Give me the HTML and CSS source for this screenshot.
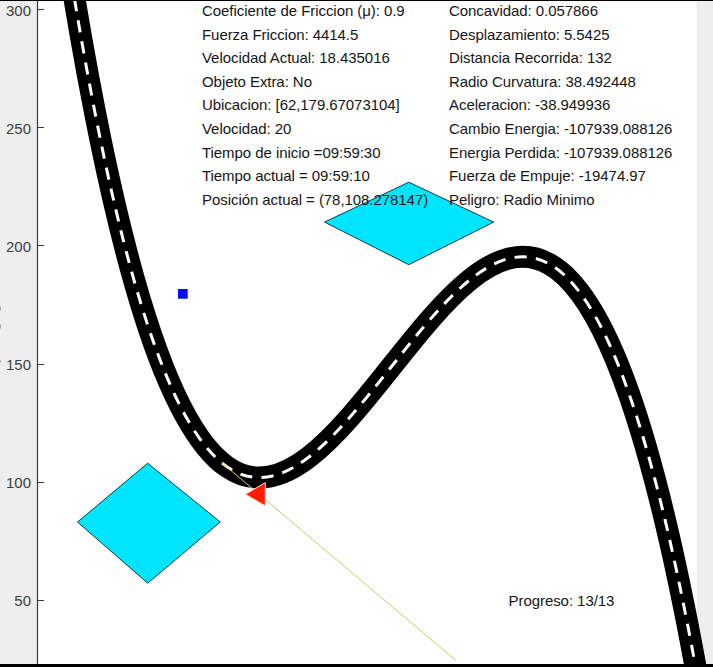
FILE: index.html
```html
<!DOCTYPE html>
<html lang="es">
<head>
<meta charset="utf-8">
<title>Simulación de pista</title>
<link rel="stylesheet" href="styles.css">
</head>
<body>
<main class="figure">
  <svg class="plot" viewBox="0 0 713 667" aria-hidden="true">
    <rect class="area" x="37" y="0" width="659.5" height="667"/>
    <path class="axis" d="M37.5 0V667M38 9.5h6M38 127.5h6M38 245.5h6M38 364.5h6M38 482.5h6M38 600.5h6"/>
    <path class="obstacle" d="M408.8 182.2L493.7 222.1L408.8 264.7L324.5 222.1Z"/>
    <path class="obstacle" d="M147.7 463.2L220.3 522L147.7 583.2L77.5 522Z"/>
    <path class="road" d="M61.75 -81.3C276.85 1338.7 491.97 -554.7 707.08 732.8"/>
    <path class="lane" d="M61.75 -81.3C276.85 1338.7 491.97 -554.7 707.08 732.8"/>
    <path class="tangent" d="M221.5 462.5L455.7 660.3"/>
    <path class="car" d="M245.5 494.3L265.3 482.6V505.8Z"/>
    <rect class="object" x="178" y="289" width="9.7" height="9.7"/>
    <path class="clipped" d="M0 306.5v4M0 324.5v4M0 360.5v2"/>
    <path class="edge" d="M0 0H713V1H0ZM0 664H713V667H0Z"/>
  </svg>
  <div class="ticks">
    <span>300</span><span>250</span><span>200</span><span>150</span><span>100</span><span>50</span>
  </div>
  <section class="readout">
    <div class="column">
      <p>Coeficiente de Friccion (μ): 0.9</p>
      <p>Fuerza Friccion: 4414.5</p>
      <p>Velocidad Actual: 18.435016</p>
      <p>Objeto Extra: No</p>
      <p>Ubicacion: [62,179.67073104]</p>
      <p>Velocidad: 20</p>
      <p>Tiempo de inicio =09:59:30</p>
      <p>Tiempo actual = 09:59:10</p>
      <p>Posición actual = (78,108.278147)</p>
    </div>
    <div class="column">
      <p>Concavidad: 0.057866</p>
      <p>Desplazamiento: 5.5425</p>
      <p>Distancia Recorrida: 132</p>
      <p>Radio Curvatura: 38.492448</p>
      <p>Aceleracion: -38.949936</p>
      <p>Cambio Energia: -107939.088126</p>
      <p>Energia Perdida: -107939.088126</p>
      <p>Fuerza de Empuje: -19474.97</p>
      <p>Peligro: Radio Minimo</p>
    </div>
  </section>
  <p class="progress">Progreso: 13/13</p>
</main>
</body>
</html>
```
FILE: styles.css
```css
body { margin: 0; }
p { margin: 0; }
.figure {
  position: relative;
  width: 713px;
  height: 667px;
  overflow: hidden;
  background: #eee;
  font-family: "Liberation Sans", Arial, sans-serif;
  font-size: 15px;
  color: #161616;
}
.plot { display: block; width: 713px; height: 667px; }
.area { fill: #fefefe; }
.axis { fill: none; stroke: #3c3c3c; stroke-width: 1.2; }
.obstacle { fill: #00e5ff; stroke: #123b40; stroke-width: 1; }
.road { fill: none; stroke: #000; stroke-width: 22; }
.lane {
  fill: none;
  stroke: #fff;
  stroke-width: 3;
  stroke-dasharray: 12.2 9.232;
  stroke-dashoffset: -17.1;
}
.tangent { stroke: #d5c66c; stroke-width: 1; }
.car { fill: #ff1c05; stroke: #f6d5d0; stroke-width: 1; }
.object { fill: #0808f4; }
.clipped { stroke: #999; stroke-width: 1.6; }
.edge { fill: #000; }
.ticks {
  position: absolute;
  top: -1.4px;
  left: 0;
  width: 31px;
  display: flex;
  flex-direction: column;
  text-align: right;
  color: #404040;
}
.ticks span { height: 118.1px; line-height: 24px; }
.readout {
  position: absolute;
  top: -1px;
  left: 202px;
  display: grid;
  grid-template-columns: 247px auto;
  line-height: 23.6px;
  letter-spacing: -0.06px;
  white-space: nowrap;
}
.progress {
  position: absolute;
  top: 589px;
  left: 508.5px;
  line-height: 23px;
  letter-spacing: -0.06px;
}
```
